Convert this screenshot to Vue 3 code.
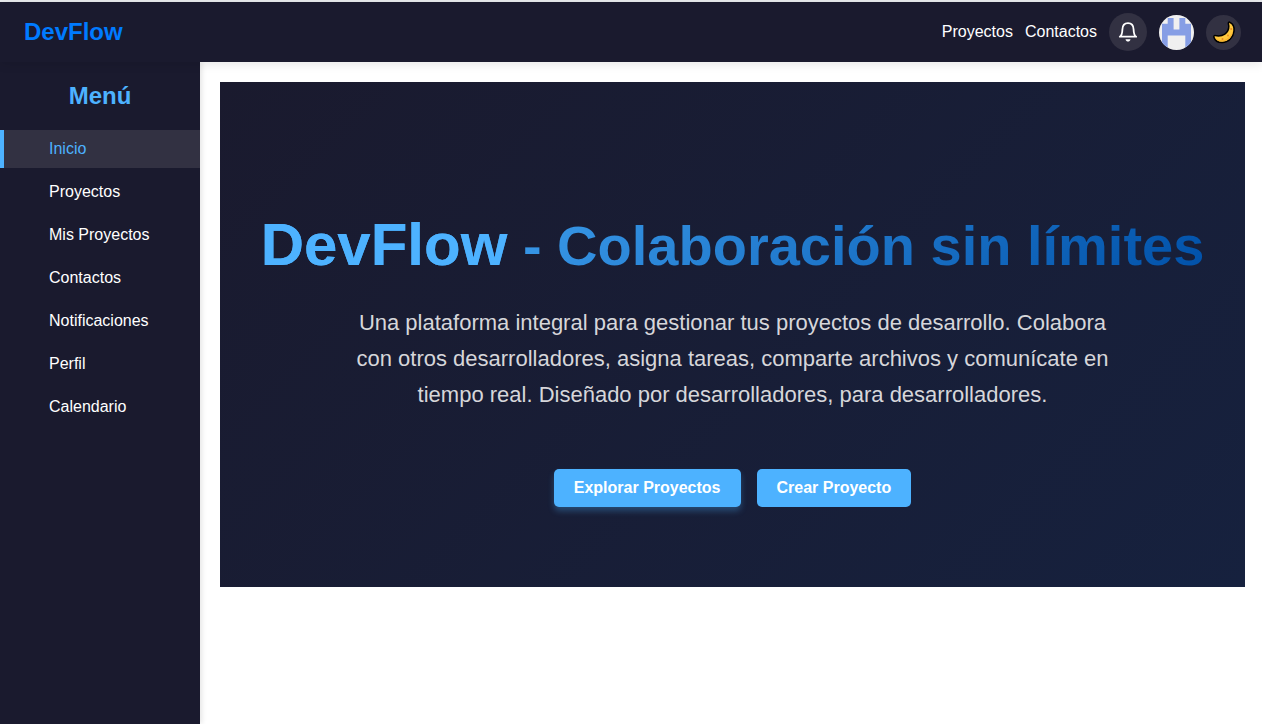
<script setup>
const menu = ['Inicio', 'Proyectos', 'Mis Proyectos', 'Contactos', 'Notificaciones', 'Perfil', 'Calendario']
const active = 'Inicio'
</script>

<template>
  <div class="app">
    <header class="topbar">
      <a class="brand" href="#">DevFlow</a>
      <nav class="actions" aria-label="Principal">
        <a class="link" href="#">Proyectos</a>
        <a class="link" href="#">Contactos</a>
        <button class="round bell" type="button" aria-label="Notificaciones">
          <svg width="24" height="24" viewBox="0 0 24 24" fill="none" stroke="#fff" stroke-width="1.8" stroke-linecap="round" stroke-linejoin="round">
            <path d="M3.8 16.700H20.200C18.200 15.600 17.700 13.200 17.600 9.500C17.500 5.400 15.400 3.100 12 3.100S6.500 5.400 6.400 9.500C6.300 13.200 5.800 15.600 3.800 16.700Z" />
            <path d="M9.500 19.200H14.500C14 22.400 10 22.400 9.500 19.200Z" fill="#fff" stroke="none" />
          </svg>
        </button>
        <button class="round avatar" type="button" aria-label="Perfil">
          <svg width="35" height="35" viewBox="0 0 35 35">
            <rect width="35" height="35" fill="#f0f0f0" />
            <path d="M8.700 3H14.600V14.600H20.400V3H26.300V8.700H32V32H26.300V20.500H8.700V32H3V8.700H8.700Z" fill="#869ee5" />
          </svg>
        </button>
        <button class="round theme" type="button" aria-label="Cambiar tema">
          <svg width="24" height="24" viewBox="0 0 24 24">
            <path d="M17.700 2.200C20.900 3.700 22.600 7.200 22 11.200C21.200 17.700 16.300 22.500 10.400 22.600C6.100 22.700 2.900 20.600 1.900 17.300C1.500 16.100 2.200 15.300 3.400 15.600C10.500 17 16.900 13.200 16.800 6.300C16.800 4.900 16.100 3.700 16.400 2.700C16.600 2.100 17.100 1.900 17.700 2.200Z" fill="#ffc83d" stroke="#000" stroke-width="1.500" stroke-linejoin="round" />
            <path d="M3.600 17.900C7.200 21 13 20.700 16.600 17.500C19 15.500 20.500 13 21 10.300C21 15.900 16.800 21.400 10.400 21.600C7.100 21.700 4.600 20.200 3.600 17.900Z" fill="#f9b52e" />
            <circle cx="19.200" cy="9" r="1" fill="#e78a24" />
            <circle cx="16" cy="15.500" r="0.900" fill="#e78a24" />
            <circle cx="10.500" cy="19" r="1" fill="#e78a24" />
          </svg>
        </button>
      </nav>
    </header>

    <div class="body">
      <aside class="sidebar">
        <h2>Menú</h2>
        <ul>
          <li v-for="item in menu" :key="item">
            <a href="#" :class="{ active: item === active }">{{ item }}</a>
          </li>
        </ul>
      </aside>

      <main class="content">
        <section class="hero">
          <h1><span>DevFlow</span> - Colaboración sin límites</h1>
          <p>
            Una plataforma integral para gestionar tus proyectos de desarrollo. Colabora con otros
            desarrolladores, asigna tareas, comparte archivos y comunícate en tiempo real. Diseñado por
            desarrolladores, para desarrolladores.
          </p>
          <div class="buttons">
            <button class="cta raised" type="button">Explorar Proyectos</button>
            <button class="cta" type="button">Crear Proyecto</button>
          </div>
        </section>
      </main>
    </div>
  </div>
</template>

<style>
body {
  margin: 0;
  background: #fff;
}
</style>

<style scoped>
.app {
  display: flex;
  flex-direction: column;
  box-sizing: border-box;
  min-height: 100vh;
  border-top: 2px solid #e9ebee;
  font-family: "Liberation Sans", Arial, sans-serif;
  font-size: 16px;
}
a {
  text-decoration: none;
}
.topbar {
  position: relative;
  z-index: 2;
  display: flex;
  align-items: center;
  justify-content: space-between;
  box-sizing: border-box;
  height: 60px;
  padding: 0 21px 0 24px;
  background: #1a1a2e;
  box-shadow: 0 2px 10px rgba(0, 0, 0, 0.1);
}
.brand {
  color: #007bff;
  font-size: 24px;
  font-weight: bold;
}
.actions {
  display: flex;
  align-items: center;
  gap: 12px;
}
.link {
  color: #fff;
}
.round {
  display: flex;
  align-items: center;
  justify-content: center;
  width: 35px;
  height: 35px;
  padding: 0;
  border: 0;
  border-radius: 50%;
  overflow: hidden;
  background: #323142;
}
.bell {
  width: 38px;
  height: 38px;
}
.body {
  display: flex;
  flex: 1;
}
.sidebar {
  flex: 0 0 200px;
  background: #1a1a2e;
  box-shadow: 2px 0 5px rgba(0, 0, 0, 0.1);
}
.sidebar h2 {
  margin: 20px 0;
  color: #4db2ff;
  font-size: 24px;
  line-height: 28px;
  text-align: center;
}
.sidebar ul {
  display: flex;
  flex-direction: column;
  gap: 5px;
  margin: 0;
  padding: 0;
  list-style: none;
}
.sidebar li a {
  display: block;
  padding: 10px 20px 10px 45px;
  border-left: 4px solid transparent;
  color: #fff;
  line-height: 18px;
}
.sidebar li a.active {
  border-color: #4db2ff;
  background: #323142;
  color: #4db2ff;
}
.content {
  flex: 1;
  min-width: 0;
  padding: 20px 17px 20px 20px;
}
.hero {
  display: flex;
  flex-direction: column;
  align-items: center;
  padding: 128px 40px 80px;
  background: linear-gradient(135deg, #1a1a2e 0%, #16213e 100%);
  text-align: center;
}
h1 {
  margin: 0 0 24px;
  background: linear-gradient(135deg, #4db2ff 0%, #0050a8 100%);
  background-clip: text;
  -webkit-background-clip: text;
  color: transparent;
  font-size: 56px;
  line-height: 70px;
  white-space: nowrap;
}
h1 span {
  color: #4db2ff;
  font-size: 60px;
}
.hero p {
  max-width: 770px;
  margin: 0 0 56px;
  color: #d6d6da;
  font-size: 22px;
  line-height: 36px;
}
.buttons {
  display: flex;
  gap: 16px;
}
.cta {
  padding: 10px 20px;
  border: 0;
  border-radius: 5px;
  background: #4db2ff;
  color: #fff;
  font-family: inherit;
  font-size: 16px;
  font-weight: bold;
  line-height: 18px;
}
.raised {
  box-shadow: 0 4px 6px rgba(77, 178, 255, 0.3);
}
</style>
